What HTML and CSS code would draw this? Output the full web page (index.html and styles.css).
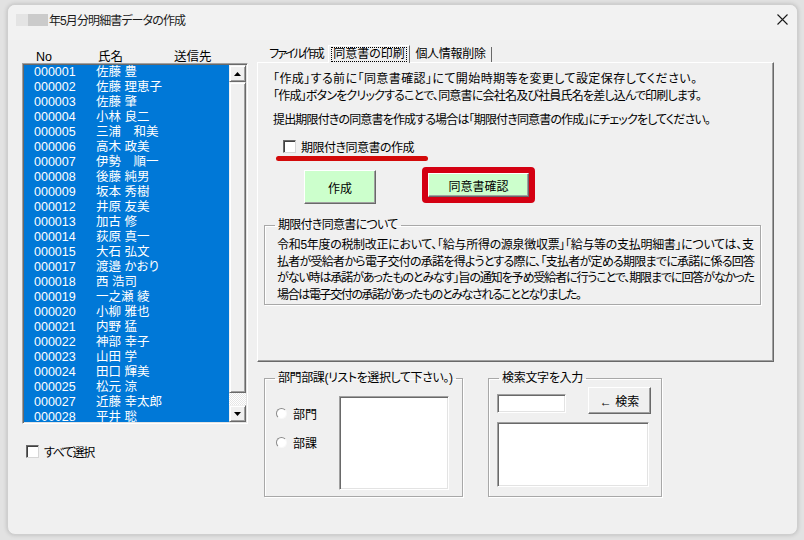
FILE: index.html
```html
<!DOCTYPE html>
<html lang="ja">
<head>
<meta charset="utf-8">
<title>年5月分明細書データの作成</title>
<link rel="stylesheet" href="styles.css">
</head>
<body>
<div class="window">
  <div class="titlebar">
    <span class="blur1"></span><span class="blur2"></span>
    <span class="title">年5月分明細書データの作成</span>
    <svg class="close" width="11" height="11" viewBox="0 0 11 11"><path d="M0.5 0.5L10.5 10.5M10.5 0.5L0.5 10.5" stroke="#1a1a1a" stroke-width="1.1" fill="none"/></svg>
  </div>
  <div class="content">
    <div class="left">
      <div class="colhead"><span class="h-no">No</span><span class="h-name">氏名</span><span class="h-dest">送信先</span></div>
      <div class="listbox">
        <div class="rows">
          <div class="row"><span class="id">000001</span><span>佐藤 豊</span></div>
          <div class="row"><span class="id">000002</span><span>佐藤 理恵子</span></div>
          <div class="row"><span class="id">000003</span><span>佐藤 肇</span></div>
          <div class="row"><span class="id">000004</span><span>小林 良二</span></div>
          <div class="row"><span class="id">000005</span><span>三浦　和美</span></div>
          <div class="row"><span class="id">000006</span><span>高木 政美</span></div>
          <div class="row"><span class="id">000007</span><span>伊勢　順一</span></div>
          <div class="row"><span class="id">000008</span><span>後藤 純男</span></div>
          <div class="row"><span class="id">000009</span><span>坂本 秀樹</span></div>
          <div class="row"><span class="id">000012</span><span>井原 友美</span></div>
          <div class="row"><span class="id">000013</span><span>加古 修</span></div>
          <div class="row"><span class="id">000014</span><span>荻原 真一</span></div>
          <div class="row"><span class="id">000015</span><span>大石 弘文</span></div>
          <div class="row"><span class="id">000017</span><span>渡邉 かおり</span></div>
          <div class="row"><span class="id">000018</span><span>西 浩司</span></div>
          <div class="row"><span class="id">000019</span><span>一之瀬 綾</span></div>
          <div class="row"><span class="id">000020</span><span>小柳 雅也</span></div>
          <div class="row"><span class="id">000021</span><span>内野 猛</span></div>
          <div class="row"><span class="id">000022</span><span>神部 幸子</span></div>
          <div class="row"><span class="id">000023</span><span>山田 学</span></div>
          <div class="row"><span class="id">000024</span><span>田口 輝美</span></div>
          <div class="row"><span class="id">000025</span><span>松元 涼</span></div>
          <div class="row"><span class="id">000027</span><span>近藤 幸太郎</span></div>
          <div class="row"><span class="id">000028</span><span>平井 聡</span></div>
        </div>
        <div class="scrollbar">
          <div class="sb-btn"><svg width="7" height="4" viewBox="0 0 7 4"><path d="M3.5 0L7 4H0Z" fill="#000"/></svg></div>
          <div class="sb-thumb"></div>
          <div class="sb-track"></div>
          <div class="sb-btn"><svg width="7" height="4" viewBox="0 0 7 4"><path d="M0 0H7L3.5 4Z" fill="#000"/></svg></div>
        </div>
      </div>
      <div class="check selectall"><span class="box"></span><span class="lbl-all">すべて選択</span></div>
    </div>
    <div class="right">
      <div class="tabs">
        <div class="tab t1">ファイル作成</div>
        <div class="tab t2 active"><span class="focus">同意書の印刷</span></div>
        <div class="tab t3">個人情報削除</div>
      </div>
      <div class="panel">
        <p class="desc"><span class="ln w-p1">「作成」する前に「同意書確認」にて開始時期等を変更して設定保存してください。</span><span class="ln w-p2">「作成」ボタンをクリックすることで、同意書に会社名及び社員氏名を差し込んで印刷します。</span></p>
        <p class="desc desc2"><span class="ln w-p3">提出期限付きの同意書を作成する場合は「期限付き同意書の作成」にチェックをしてください。</span></p>
        <div class="check limit"><span class="box"></span><span class="lbl-limit">期限付き同意書の作成</span></div>
        <div class="red-underline"></div>
        <div class="btnrow">
          <div class="btn green make">作成</div>
          <div class="redframe"><div class="btn green confirm">同意書確認</div></div>
        </div>
        <fieldset class="group info">
          <legend class="lg-info">期限付き同意書について</legend>
          <p class="info-text"><span class="ln w-i1">令和5年度の税制改正において、「給与所得の源泉徴収票」「給与等の支払明細書」については、支</span><span class="ln w-i2">払者が受給者から電子交付の承諾を得ようとする際に、「支払者が定める期限までに承諾に係る回答</span><span class="ln w-i3">がない時は承諾があったものとみなす」旨の通知を予め受給者に行うことで、期限までに回答がなかった</span><span class="ln w-i4">場合は電子交付の承諾があったものとみなされることとなりました。</span></p>
        </fieldset>
      </div>
      <div class="bottom">
        <fieldset class="group dept">
          <legend class="lg-dept">部門部課(リストを選択して下さい。)</legend>
          <div class="dept-body">
            <div class="radios">
              <div class="radio"><span class="circle"></span><span>部門</span></div>
              <div class="radio"><span class="circle"></span><span>部課</span></div>
            </div>
            <div class="sunken dept-list"></div>
          </div>
        </fieldset>
        <fieldset class="group search">
          <legend class="lg-search">検索文字を入力</legend>
          <div class="search-row">
            <div class="sunken search-input"></div>
            <div class="btn search-btn">← 検索</div>
          </div>
          <div class="sunken search-list"></div>
        </fieldset>
      </div>
    </div>
  </div>
</div>
</body>
</html>
```

FILE: styles.css
```css
* { box-sizing: border-box; }
html, body { margin: 0; padding: 0; }
body {
  width: 804px;
  height: 540px;
  background: #e2e2e2;
  padding: 4px 0 0 7px;
  font-family: "Liberation Sans", "Noto Sans CJK JP", sans-serif;
  font-size: 12px;
  color: #000;
  font-feature-settings: "palt";
  overflow: hidden;
}
.window {
  width: 791px;
  height: 531px;
  background: #f0f0f0;
  border: 1px solid #cfcfcf;
  border-radius: 8px;
  box-shadow: 0 0 4px rgba(0,0,0,0.18);
  display: flex;
  flex-direction: column;
  overflow: hidden;
}
.titlebar {
  height: 35px;
  flex: none;
  display: flex;
  align-items: center;
  padding: 0 0 6px 8px;
  background: #f2f2f2;
}
.blur1 { width: 12px; height: 12px; background: #e4e4e4; }
.blur2 { width: 20px; height: 12px; background: #cbcbcb; }
.title { margin-left: 1px; font-size: 12px; color: #1a1a1a; letter-spacing: -0.9px; }
.close { margin-left: auto; margin-right: 9px; }

.content {
  display: flex;
  padding: 5px 0 0 14px;
  flex: 1;
}
.left { width: 226px; flex: none; }
.colhead {
  height: 18px;
  padding-top: 6px;
  line-height: 12px;
  display: flex;
  font-size: 12.5px;
}
.h-no { margin-left: 14px; width: 62px; }
.h-name { width: 76px; }
.listbox {
  height: 361px;
  display: flex;
  border: 1px solid;
  border-color: #a0a0a0 #ffffff #ffffff #a0a0a0;
  box-shadow: inset 1px 1px 0 #696969, inset -1px -1px 0 #e3e3e3;
  padding: 1px;
  background: #0078d7;
}
.rows {
  flex: 1;
  background: #0078d7;
  color: #fff;
}
.row {
  height: 15px;
  line-height: 15px;
  padding-left: 10px;
  display: flex;
  white-space: nowrap;
  font-size: 12.5px;
}
.row .id { width: 62px; }
.scrollbar {
  width: 17px;
  display: flex;
  flex-direction: column;
  background: #f0f0f0;
}
.sb-btn {
  height: 17px;
  flex: none;
  display: flex;
  align-items: center;
  justify-content: center;
  background: #f0f0f0;
  border: 1px solid;
  border-color: #f0f0f0 #696969 #696969 #f0f0f0;
  box-shadow: inset 1px 1px 0 #fff, inset -1px -1px 0 #a0a0a0;
}
.sb-thumb {
  height: 311px;
  flex: none;
  background: #f0f0f0;
  border: 1px solid;
  border-color: #f0f0f0 #696969 #696969 #f0f0f0;
  box-shadow: inset 1px 1px 0 #fff, inset -1px -1px 0 #a0a0a0;
}
.sb-track {
  flex: 1;
  background-color: #f4f4f4;
  background-image: repeating-conic-gradient(#ffffff 0 25%, #e6e6e6 0 50%);
  background-size: 2px 2px;
}

.check { display: flex; align-items: center; white-space: nowrap; }
.box {
  width: 13px;
  height: 13px;
  background: #fff;
  border: 1px solid;
  border-color: #6a6a6a #d6d6d6 #d6d6d6 #6a6a6a;
  box-shadow: inset 1px 1px 0 #404040;
  flex: none;
}
.selectall { margin: 19px 0 0 4px; font-size: 12px; }
.selectall .box { margin-right: 5px; }
.lbl-all { letter-spacing: -1.4px; }

.right { width: 517px; margin-left: 9px; flex: none; }
.tabs { height: 17px; display: flex; align-items: flex-end; padding-left: 1px; }
.tab {
  height: 15px;
  line-height: 14px;
  text-align: center;
  white-space: nowrap;
  border-right: 1px solid #696969;
  font-size: 12px;
}
.t1 { width: 70px; border-right: none; letter-spacing: -2px; padding-left: 6px; }
.t2 {
  height: 18px;
  width: 82px;
  border-left: 1px solid #fff;
  border-top: 1px solid #fff;
  padding: 1px 2px 0 2px;
  margin-bottom: -1px;
  background: #f0f0f0;
}
.focus {
  display: block;
  border: 1px dotted #000;
  line-height: 13px;
  height: 15px;
}
.t3 { width: 82px; letter-spacing: -0.3px; }
.panel {
  height: 300px;
  border: 1px solid;
  border-color: #fff #696969 #696969 #fff;
  box-shadow: inset -1px -1px 0 #a0a0a0;
  padding: 8px 0 0 15px;
}
.desc { margin: 0; line-height: 17px; }
.desc2 { margin-top: 7px; }
.ln {
  display: block;
  text-align: justify;
  text-align-last: justify;
  letter-spacing: -2px;
}
.w-p1 { width: 422px; }
.w-p2 { width: 427px; }
.w-p3 { width: 436px; }
.w-i1 { width: 475px; }
.w-i2 { width: 476px; }
.w-i3 { width: 476px; }
.w-i4 { width: 303px; }
.limit { margin: 11px 0 0 10px; height: 13px; }
.limit .box { margin-right: 5px; }
.lbl-limit { letter-spacing: -0.5px; }
.red-underline {
  margin: 3px 0 0 3px;
  width: 152px;
  height: 5px;
  border-radius: 3px;
  background: #d30a0a;
}
.btnrow { display: flex; align-items: flex-start; margin-top: 6px; }
.btn {
  display: flex;
  align-items: center;
  justify-content: center;
  background: #f0f0f0;
  border: 1px solid;
  border-color: #fff #696969 #696969 #fff;
  box-shadow: inset -1px -1px 0 #a0a0a0;
  white-space: nowrap;
}
.green { background: #ccffcc; }
.make { width: 72px; height: 34px; margin: 3px 0 0 31px; }
.redframe {
  margin-left: 46px;
  width: 113px;
  height: 36px;
  border: 6px solid #d40012;
  border-radius: 4px;
}
.confirm { width: 100%; height: 100%; }

.group {
  margin: 0;
  padding: 0;
  border: 1px solid #a8a8a8;
  box-shadow: inset 1px 1px 0 #fff, 1px 1px 0 #fff;
  min-width: 0;
}
.group legend {
  padding: 0 3px;
  margin-left: 10px;
  line-height: 16px;
  white-space: nowrap;
}
.lg-info { letter-spacing: -0.7px; }
.lg-dept { letter-spacing: -0.4px; }
.lg-search { letter-spacing: -0.3px; }
.info { margin: 13px 0 0 -9px; width: 497px; height: 88px; }
.info-text { margin: 4px 0 0 12px; line-height: 16.7px; }

.bottom { display: flex; margin-top: 8px; padding-left: 7px; }
.dept { width: 199px; height: 127px; }
.dept-body { display: flex; padding-left: 11px; }
.radios { width: 63px; padding-top: 21px; }
.radio { display: flex; align-items: center; height: 13px; margin-bottom: 16px; }
.circle {
  width: 11px;
  height: 11px;
  border-radius: 50%;
  background: #fff;
  border: 1px solid;
  border-color: #8a8a8a #f8f8f8 #f8f8f8 #8a8a8a;
  margin-right: 6px;
  flex: none;
}
.sunken {
  background: #fff;
  border: 1px solid;
  border-color: #a0a0a0 #fff #fff #a0a0a0;
  box-shadow: inset 1px 1px 0 #696969, inset -1px -1px 0 #e3e3e3;
}
.dept-list { width: 110px; height: 94px; margin-top: 10px; }
.search { width: 174px; height: 127px; margin-left: 25px; }
.search-row { display: flex; align-items: flex-start; margin-left: 8px; }
.search-input { width: 69px; height: 19px; margin-top: 8px; }
.search-btn { width: 63px; height: 27px; margin: 1px 0 0 22px; }
.search-list { width: 152px; height: 65px; margin: 8px 0 0 8px; }
```
